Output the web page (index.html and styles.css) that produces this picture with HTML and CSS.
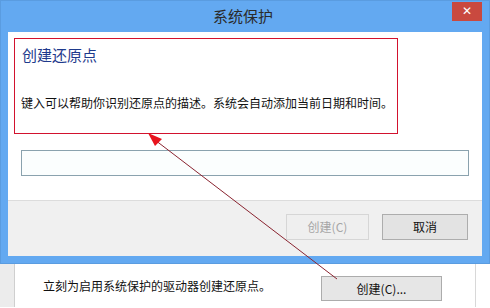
FILE: index.html
```html
<!DOCTYPE html>
<html>
<head>
<meta charset="utf-8">
<link rel="stylesheet" href="styles.css">
</head>
<body>
<div class="page">
  <div class="dialog">
    <div class="titlebar">
      <div class="title">系统保护</div>
      <div class="close">✕</div>
    </div>
    <div class="frame">
      <div class="client">
        <div class="content">
          <div class="callout">
            <div class="heading">创建还原点</div>
            <div class="desc">键入可以帮助你识别还原点的描述。系统会自动添加当前日期和时间。</div>
          </div>
          <div class="input"></div>
        </div>
        <div class="footer">
          <div class="btn disabled">创建(C)</div>
          <div class="btn">取消</div>
        </div>
      </div>
    </div>
  </div>
  <div class="under">
    <div class="sidebar"></div>
    <div class="under-body">
      <div class="under-text">立刻为启用系统保护的驱动器创建还原点。</div>
      <div class="btn big">创建(C)...</div>
    </div>
    <div class="under-edge"></div>
  </div>
  <svg class="arrow" width="490" height="308" viewBox="0 0 490 308">
    <line x1="337" y1="279" x2="155" y2="140" stroke="#8a2430" stroke-width="1"/>
    <polygon points="148,133 162,139 155,146" fill="#e8141e"/>
  </svg>
</div>
</body>
</html>
```

FILE: styles.css
```css
html, body {
  margin: 0;
  padding: 0;
}
body {
  width: 490px;
  height: 308px;
  overflow: hidden;
  background: #ffffff;
  font-family: "Noto Sans CJK SC", "Microsoft YaHei", sans-serif;
  color: #1a1a1a;
}
.page {
  position: relative;
  width: 490px;
  height: 308px;
}
.dialog {
  width: 490px;
  background: #63a9f1;
  box-shadow: inset 0 0 0 1px #5a9ce0;
}
.titlebar {
  height: 32px;
  display: flex;
  justify-content: center;
  position: relative;
}
.title {
  font-size: 15px;
  line-height: 32px;
  color: #2a2a2a;
  margin-left: -4px;
}
.close {
  position: absolute;
  right: 8px;
  top: 2px;
  width: 30px;
  height: 19px;
  background: #c9493f;
  color: #ffffff;
  font-size: 12px;
  line-height: 19px;
  text-align: center;
  font-family: "DejaVu Sans", sans-serif;
}
.frame {
  padding: 0 8px 8px 8px;
}
.client {
  background: #ffffff;
  display: flex;
  flex-direction: column;
}
.content {
  height: 169px;
  padding: 6px 0 0 6px;
  box-sizing: border-box;
  border-bottom: 1px solid #dcdcdc;
}
.callout {
  width: 384px;
  height: 96px;
  box-sizing: border-box;
  border: 1px solid #d2122e;
  padding: 6px 0 0 7px;
}
.heading {
  font-size: 15px;
  line-height: 20px;
  color: #1e3a8c;
}
.desc {
  font-size: 12px;
  line-height: 16px;
  margin-top: 30px;
  margin-left: -1px;
  color: #111;
}
.input {
  width: 448px;
  height: 26px;
  box-sizing: border-box;
  margin: 16px 0 0 7px;
  border: 1px solid #8aa2ae;
  background: #fbfefe;
}
.footer {
  height: 55px;
  background: #f0f0f0;
  display: flex;
  justify-content: flex-end;
  align-items: flex-start;
  gap: 13px;
  padding: 13px 14px 0 0;
  box-sizing: border-box;
}
.btn {
  height: 26px;
  box-sizing: border-box;
  border: 1px solid #adadad;
  background: #e3e3e3;
  font-size: 12px;
  line-height: 24px;
  text-align: center;
  color: #111;
  width: 86px;
}
.btn.disabled {
  width: 83px;
  border-color: #d6d6d6;
  background: #efefef;
  color: #a6a6a6;
}
.under {
  display: flex;
  height: 43px;
}
.sidebar {
  width: 14px;
  background: #ececec;
  border-right: 1px solid #cfcfcf;
}
.under-body {
  flex: 1;
  display: flex;
  align-items: flex-start;
  padding: 12px 0 0 28px;
  box-sizing: border-box;
}
.under-text {
  font-size: 12px;
  line-height: 16px;
  margin-top: 2px;
  color: #111;
  width: 278px;
}
.btn.big {
  width: 121px;
  height: 25px;
  line-height: 23px;
  background: #e6e6e6;
  border-color: #acacac;
}
.under-edge {
  width: 14px;
  border-left: 1px solid #d8d8d8;
}
.arrow {
  position: absolute;
  left: 0;
  top: 0;
  pointer-events: none;
}
```
